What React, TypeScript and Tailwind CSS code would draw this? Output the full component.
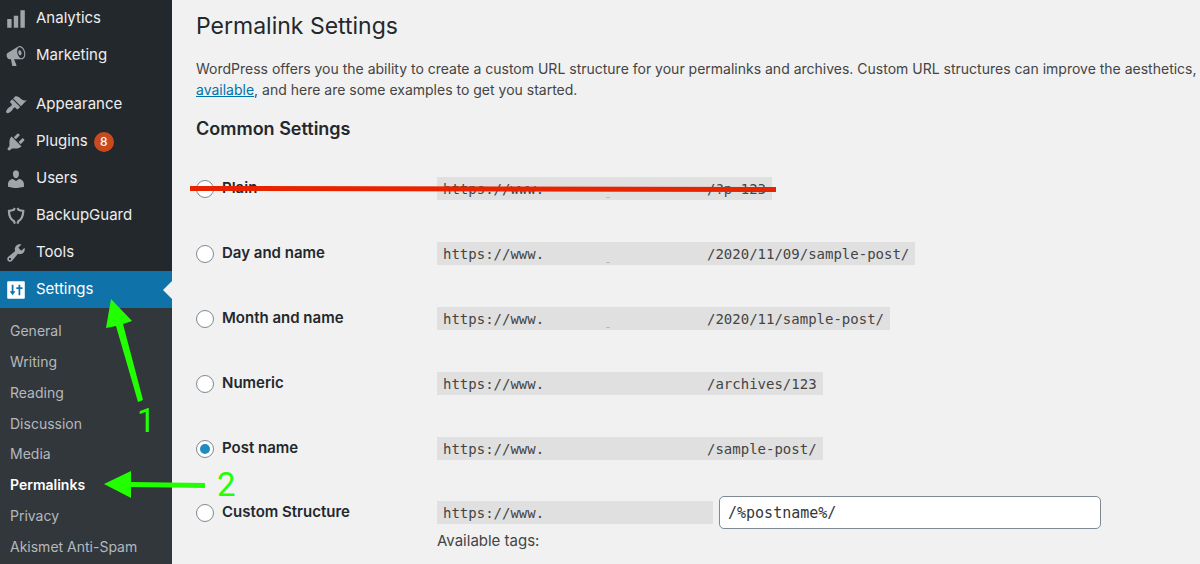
import { ReactNode, useState } from "react";
import clsx from "clsx";

interface IMenuItem {
  label: string;
  icon: ReactNode;
  badge?: number;
  current?: boolean;
}

interface IStructure {
  id: string;
  label: string;
  path: string;
  dash?: boolean;
}

const mainMenu: IMenuItem[] = [
  {
    label: "Analytics",
    icon: <path d="M18 18V2h-4v16h4zm-6 0V7H8v11h4zm-6 0v-8H2v8h4z" />,
  },
  {
    label: "Marketing",
    icon: (
      <path
        fillRule="evenodd"
        d="M18.15 5.94c.46 1.62.38 3.22-.02 4.48-.42 1.28-1.26 2.18-2.3 2.48-.16.06-.26.06-.4.06-.06.02-.12.02-.18.02-.06.02-.14.02-.22.02h-6.8l2.22 5.5c.02.14-.06.26-.14.34-.08.1-.24.16-.34.16H6.95c-.1 0-.26-.06-.34-.16-.08-.08-.16-.2-.14-.34l-1-5.5H4.25l-.02-.02c-.5.06-1.08-.18-1.54-.62s-.88-1.08-1.06-1.88c-.24-.8-.2-1.56-.02-2.2.18-.62.58-1.08 1.06-1.3l.02-.02 9-5.4c.1-.06.18-.1.24-.16.06-.04.14-.08.24-.12.16-.08.28-.12.5-.18 1.04-.3 2.24.1 3.22.98s1.84 2.24 2.26 3.86zm-2.58 5.98h-.02c.4-.1.74-.34 1.04-.7.58-.7.86-1.76.86-3.04 0-.64-.1-1.3-.28-1.98-.34-1.36-1.02-2.5-1.78-3.24s-1.68-1.1-2.46-.88c-.82.22-1.4.96-1.7 2-.32 1.04-.28 2.36.06 3.72.38 1.36 1 2.5 1.8 3.24.78.74 1.62 1.1 2.48.88zm-2.54-7.08c.22-.04.42-.02.62.04.38.16.76.48 1.02 1s.42 1.2.42 1.78c0 .3-.04.56-.12.8-.18.48-.44.84-.86.94-.34.1-.8-.06-1.14-.4s-.64-.86-.78-1.5c-.18-.62-.12-1.24.02-1.72s.48-.84.82-.94z"
      />
    ),
  },
];

const adminMenu: IMenuItem[] = [
  {
    label: "Appearance",
    icon: (
      <path d="M14.48 11.06L7.41 3.99l1.5-1.5c.5-.56 2.3-.47 3.51.32 1.21.8 1.43 1.28 2.91 2.1 1.18.64 2.45 1.26 4.45.85zm-.71.71L6.7 4.7 4.93 6.47c-.39.39-.39 1.02 0 1.41l1.06 1.06c.39.39.39 1.03 0 1.42-.6.6-1.43 1.11-2.21 1.69-.35.26-.7.53-1.01.84C1.43 14.23.4 16.08 1.4 17.07c.99 1 2.84-.03 4.18-1.36.31-.31.58-.66.85-1.02.57-.78 1.08-1.61 1.69-2.21.39-.39 1.02-.39 1.41 0l1.06 1.06c.39.39 1.02.39 1.41 0z" />
    ),
  },
  {
    label: "Plugins",
    badge: 8,
    icon: (
      <path d="M13.11 4.36L9.87 7.6 8 5.73l3.24-3.24c.35-.34 1.05-.2 1.56.32.52.51.66 1.21.31 1.55zm-8 1.77l.91-1.12 9.01 9.01-1.19.84c-.71.71-2.63 1.16-3.82 1.16H6.14L4.9 17.26c-.59.59-1.54.59-2.12 0-.59-.58-.59-1.53 0-2.12l1.24-1.24v-3.88c0-1.13.4-3.19 1.09-3.89zm7.26 3.97l3.24-3.24c.34-.35 1.04-.21 1.55.31.52.51.66 1.21.31 1.55l-3.24 3.25z" />
    ),
  },
  {
    label: "Users",
    icon: (
      <path d="M10 9.25c-2.27 0-2.73-3.44-2.73-3.44C7 4.02 7.82 2 9.97 2c2.16 0 2.98 2.02 2.71 3.81 0 0-.41 3.44-2.68 3.44zm0 2.57L12.72 10c2.39 0 4.52 2.33 4.52 4.53v2.49s-3.65 1.13-7.24 1.13c-3.65 0-7.24-1.13-7.24-1.13v-2.49c0-2.25 1.94-4.48 4.47-4.48z" />
    ),
  },
  {
    label: "BackupGuard",
    icon: (
      <path
        fill="none"
        stroke="currentColor"
        strokeWidth="2"
        d="M8.9 2.8L8 4.4C6.800 5 5.200 5.300 3.600 5.400c0 4.400 1.600 7.600 4.600 9.400l.8 2.200M11.400 2.800l.9 1.600c1.200.6 2.600.9 4.300 1-.1 4.400-1.600 7.600-4.500 9.400l-.8 2.200"
      />
    ),
  },
  {
    label: "Tools",
    icon: (
      <path d="M16.68 9.77c-1.34 1.34-3.3 1.67-4.95.99l-5.41 6.52c-.99.99-2.59.99-3.58 0s-.99-2.59 0-3.57l6.52-5.42c-.68-1.65-.35-3.61.99-4.95 1.28-1.28 3.12-1.62 4.72-1.06l-2.89 2.89 2.82 2.82 2.86-2.87c.53 1.58.18 3.39-1.08 4.65zM3.81 16.21c.4.39 1.04.39 1.43 0 .4-.4.4-1.04 0-1.43-.39-.4-1.03-.4-1.43 0-.39.39-.39 1.03 0 1.43z" />
    ),
  },
  {
    label: "Settings",
    current: true,
    icon: (
      <path
        fillRule="evenodd"
        d="M18 17V3c0-.55-.45-1-1-1H3c-.55 0-1 .45-1 1v14c0 .55.45 1 1 1h14c.55 0 1-.45 1-1zM7.7 11.2h1.8L6.9 14.8 4.3 11.2h1.8V5.2h1.6zM12.3 14.8V9.2h-2V7.6h2V5.2h1.6v2.4h2v1.6h-2v5.6z"
      />
    ),
  },
];

const submenu = [
  "General",
  "Writing",
  "Reading",
  "Discussion",
  "Media",
  "Permalinks",
  "Privacy",
  "Akismet Anti-Spam",
];

const structures: IStructure[] = [
  { id: "plain", label: "Plain", path: "/?p=123", dash: true },
  {
    id: "day",
    label: "Day and name",
    path: "/2020/11/09/sample-post/",
    dash: true,
  },
  {
    id: "month",
    label: "Month and name",
    path: "/2020/11/sample-post/",
    dash: true,
  },
  { id: "numeric", label: "Numeric", path: "/archives/123" },
  { id: "postname", label: "Post name", path: "/sample-post/" },
];

function MenuLink({ item }: { item: IMenuItem }) {
  return (
    <li>
      <a
        href="#"
        className={clsx(
          "relative flex h-[37px] items-center pl-[5px] text-[15px]",
          item.current ? "bg-[#0f73aa] text-white" : "text-[#eeeeee]"
        )}
      >
        <svg
          viewBox="0 0 20 20"
          aria-hidden="true"
          className={clsx(
            "mr-[9px] h-[22px] w-[22px] shrink-0 fill-current",
            item.current ? "text-white" : "text-[#a0a5aa]"
          )}
        >
          {item.icon}
        </svg>
        {item.label}
        {item.badge && (
          <span className="ml-1.5 flex h-5 w-5 items-center justify-center rounded-full bg-[#ca4a1f] text-xs font-medium text-white">
            {item.badge}
          </span>
        )}
        {item.current && (
          <span className="absolute top-1/2 right-0 -translate-y-1/2 border-y-9 border-r-9 border-y-transparent border-r-[#f1f1f1]" />
        )}
      </a>
    </li>
  );
}

function Sidebar() {
  return (
    <nav className="flex w-[172px] shrink-0 flex-col bg-[#23282d]">
      <ul>
        {mainMenu.map((item) => (
          <MenuLink key={item.label} item={item} />
        ))}
      </ul>
      <ul className="mt-3">
        {adminMenu.map((item) => (
          <MenuLink key={item.label} item={item} />
        ))}
      </ul>
      <ul className="flex flex-1 flex-col bg-[#32373c] pt-2 pb-0.5">
        {submenu.map((label) => (
          <li key={label} className="flex flex-1 items-center">
            <a
              href="#"
              className={clsx(
                "pl-2.5 text-sm",
                label === "Permalinks"
                  ? "font-semibold text-white"
                  : "text-[#b4b9be]"
              )}
            >
              {label}
            </a>
          </li>
        ))}
      </ul>
    </nav>
  );
}

function StructureRadio({
  id,
  label,
  selected,
  onSelect,
}: {
  id: string;
  label: string;
  selected: string;
  onSelect: (id: string) => void;
}) {
  return (
    <label className="flex h-[23px] items-center gap-2 text-[15px] font-semibold text-[#23282d]">
      <input
        type="radio"
        name="structure"
        value={id}
        checked={selected === id}
        onChange={() => onSelect(id)}
        className="flex h-[18px] w-[18px] shrink-0 appearance-none items-center justify-center rounded-full border border-[#7e8993] bg-white before:h-2.5 before:w-2.5 before:rounded-full checked:before:bg-[#1e8cbe]"
      />
      {label}
    </label>
  );
}

function Address({ path, dash }: { path?: string; dash?: boolean }) {
  return (
    <code className="inline-flex h-[23px] items-center bg-[#e0e0e0] px-1.5 font-['DejaVu_Sans_Mono',monospace] text-sm text-[#444444]">
      <span className="w-[163px]">https://www.</span>
      <span className="flex h-full w-[101px] items-end pb-0.5">
        {dash && <span className="h-px w-1 bg-[#bbbbbb]" />}
      </span>
      {path}
    </code>
  );
}

/* Strike-through, arrows and step numbers laid over the page */
function Annotations() {
  return (
    <svg
      width="800"
      height="564"
      aria-hidden="true"
      className="pointer-events-none absolute top-0 left-0"
    >
      <path d="M190 186L776 187V192L190 191Z" fill="#e82400" />
      <g fill="#22ff00">
        <path d="M111 299L132 321L123 324L143 400L138 402L116 326L106 328Z" />
        <path d="M104 484L131 471V482L205 483V488L131 487V498Z" />
        <g className="font-[Roboto,sans-serif] text-[33px]">
          <text x="137" y="432">
            1
          </text>
          <text x="217" y="496">
            2
          </text>
        </g>
      </g>
    </svg>
  );
}

export default function App() {
  const [selected, setSelected] = useState<string>("postname");
  const [custom, setCustom] = useState<string>("/%postname%/");

  return (
    <div className="relative flex min-h-screen overflow-hidden bg-[#f1f1f1] font-['Inter',sans-serif] text-[#444444]">
      <Sidebar />
      <main className="min-w-0 flex-1 pl-6">
        <h1 className="pt-2 text-[23px] leading-9 text-[#23282d]">
          Permalink Settings
        </h1>
        <p className="mt-3.5 text-sm leading-[21px] whitespace-nowrap">
          WordPress offers you the ability to create a custom URL structure for
          your permalinks and archives. Custom URL structures can improve the
          aesthetics,
          <br />
          <a href="#" className="text-[#0073aa] underline">
            available
          </a>
          , and here are some examples to get you started.
        </p>
        <h2 className="mt-[17px] text-lg leading-6 font-semibold text-[#23282d]">
          Common Settings
        </h2>
        <table className="mt-[15px] w-full table-fixed text-left">
          <tbody>
            {structures.map(({ id, label, path, dash }) => (
              <tr key={id} className="h-[65px]">
                <th scope="row" className="w-[241px]">
                  <StructureRadio
                    id={id}
                    label={label}
                    selected={selected}
                    onSelect={setSelected}
                  />
                </th>
                <td>
                  <div className="flex">
                    <Address path={path} dash={dash} />
                  </div>
                </td>
              </tr>
            ))}
            <tr>
              <th scope="row" className="pt-[15px] align-top">
                <div className="flex h-[33px] items-center">
                  <StructureRadio
                    id="custom"
                    label="Custom Structure"
                    selected={selected}
                    onSelect={setSelected}
                  />
                </div>
              </th>
              <td className="pt-[15px]">
                <div className="flex items-center gap-1.5">
                  <Address />
                  <input
                    type="text"
                    aria-label="Custom structure"
                    value={custom}
                    onChange={(e) => setCustom(e.target.value)}
                    className="h-[33px] w-[382px] rounded-[5px] border border-[#7e8993] bg-white px-2 font-['DejaVu_Sans_Mono',monospace] text-[15px] text-[#32373c]"
                  />
                </div>
                <p className="text-[15px] leading-6">Available tags:</p>
              </td>
            </tr>
          </tbody>
        </table>
      </main>
      <Annotations />
    </div>
  );
}
